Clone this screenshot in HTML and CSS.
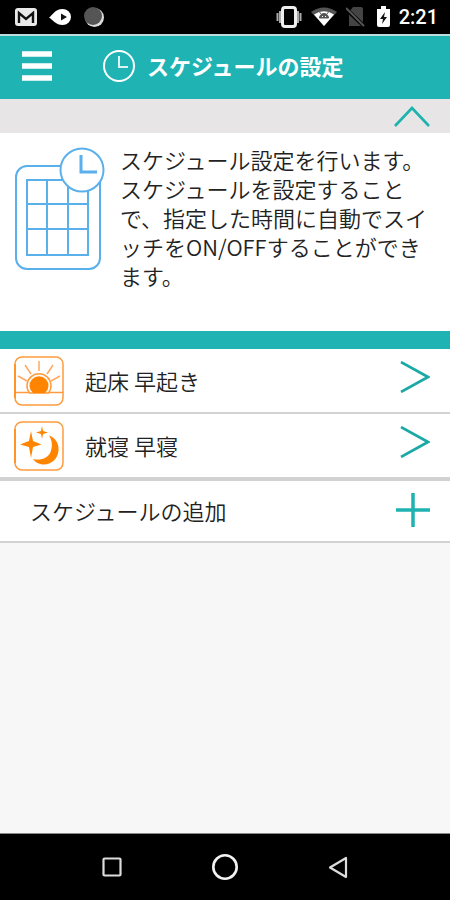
FILE: index.html
```html
<!DOCTYPE html>
<html lang="ja">
<head>
<meta charset="utf-8">
<meta name="viewport" content="width=device-width, initial-scale=1">
<title>スケジュールの設定</title>
<link rel="stylesheet" href="styles.css">
</head>
<body>
<div class="screen">
  <div class="status">
    <div class="status-group">
      <svg width="22" height="18" viewBox="0 0 22 18"><rect width="22" height="18" rx="3" fill="#e9e9e9"/><path d="M4 15V5l7 6 7-6v10" fill="none" stroke="#111" stroke-width="2.400"/></svg>
      <svg width="23" height="18" viewBox="0 0 23 18"><path d="M0 9.500C4 7 6 1 13.500 1a8.500 8 0 0 1 0 16C7 17 4 12 0 9.500z" fill="#fff"/><path d="M12 5.500l6 3.500-6 3.500z" fill="#111"/></svg>
      <svg width="20" height="20" viewBox="0 0 20 20"><circle cx="10.500" cy="10.500" r="9.500" fill="#ddd"/><circle cx="9" cy="9" r="9" fill="#555"/></svg>
    </div>
    <div class="status-group status-right">
      <svg width="26" height="22" viewBox="0 0 26 22"><path d="M1.500 7v8M4 5v12M22 5v12M24.500 7v8" stroke="#aaa" stroke-width="2"/><rect x="6.500" y="1.500" width="13" height="19" rx="2.500" fill="#000" stroke="#eee" stroke-width="3"/></svg>
      <svg width="26" height="20" viewBox="0 0 26 20"><path d="M0 5Q13-4 26 5L13 19z" fill="#555"/><path d="M3 7.500Q13 1 23 7.500L13 19z" fill="#fff"/><path d="M8.500 11a4.500 4.500 0 0 1 9 0zM10 7l-1.500-2M16 7l1.500-2" fill="#555" stroke="#555"/><path d="M11 9.500h1M14 9.500h1" stroke="#fff"/></svg>
      <svg width="19" height="20" viewBox="0 0 19 20"><path d="M7 0h8q2 0 2 2v17H3V5z" fill="#444"/><path d="M0 2l18 17" stroke="#000" stroke-width="4"/><path d="M0 1l18 18" stroke="#555" stroke-width="2"/></svg>
      <svg class="battery" width="13" height="22" viewBox="0 0 13 22"><path d="M4 0h5v3h4v16q0 2-2 2H2q-2 0-2-2V3h4z" fill="#fff"/><path d="M8 6l-5 7h3l-1 5 5-7H7z" fill="#111"/></svg>
      <span class="time">2:21</span>
    </div>
  </div>
  <header class="header">
    <button class="icon-button menu" aria-label="メニュー"><svg width="30" height="30" viewBox="0 0 30 30"><path d="M0 3h30M0 15h30M0 27h30" stroke="#fff" stroke-width="5.600"/></svg></button>
    <svg width="32" height="32" viewBox="0 0 32 32" fill="none" stroke="#fff"><circle cx="16" cy="16" r="15" stroke-width="2"/><path d="M16 6v11h9" stroke-width="2" opacity=".85"/></svg>
    <h1 class="title">スケジュールの設定</h1>
  </header>
  <main class="main">
    <div class="collapse">
      <button class="icon-button" aria-label="閉じる"><svg width="36" height="21" viewBox="0 0 36 21"><path d="M1 20L18 2l17 18" fill="none" stroke="#1db3af" stroke-width="2.600"/></svg></button>
    </div>
    <section class="intro">
      <svg class="intro-icon" width="91" height="124" viewBox="0 0 91 124" fill="none" stroke="#5ab0ea" stroke-width="2">
        <rect x="2" y="19" width="84" height="103" rx="11"/>
        <path d="M13 33h61v75H13zM33 33v75M54 33v75M13 57h61M13 82h61"/>
        <circle cx="68" cy="23" r="21.500" fill="#fff"/>
        <path d="M67 8v17h16" stroke-width="3"/>
      </svg>
      <p class="intro-text">スケジュール設定を行います。スケジュールを設定することで、指定した時間に自動でスイッチをON/OFFすることができます。</p>
    </section>
    <nav class="list">
      <a class="row" href="#wake">
        <svg width="50" height="50" viewBox="0 0 50 50" fill="none" stroke="#ff9b3d" stroke-width="1.500">
          <rect x="1" y="1" width="48" height="48" rx="7"/>
          <path d="M1 36.500h48"/><path d="M1 8v34" stroke="#ff8a10"/>
          <path d="M25 5v10M11 9l6 9M39 9l-6 9M4 20l9 5M46 20l-9 5" stroke="#ffa860"/>
          <path d="M15.500 37a12 12 0 1 1 19 0z" fill="#fff"/>
          <path d="M19 37a9.500 9.500 0 1 1 12 0z" fill="#ff8500" stroke="none"/>
        </svg>
        <span class="label">起床 早起き</span>
        <svg class="chevron" width="30" height="32" viewBox="0 0 30 32"><path d="M1 1l27 15L1 31" fill="none" stroke="#1ba9a6" stroke-width="2.600"/></svg>
      </a>
      <a class="row" href="#sleep">
        <svg width="50" height="50" viewBox="0 0 50 50">
          <rect x="1" y="1" width="48" height="48" rx="7" fill="none" stroke="#ff9b3d" stroke-width="1.500"/>
          <path d="M1 8v34" stroke="#ff8a10" stroke-width="1.500"/>
          <g fill="#ff8500"><path d="M35 14.500C42 17 45 23 44.500 29.500 44 38 37 43.500 30 43.500 25 43.500 21 41 19 38 27 40 34 37 36.500 31 39 25 38 19 35 14.500z"/><path d="M17 10l2 10 8.500 3.500L19 26l-2 11-2-11-9-2.500 9-3.500zM28 5l1 5 5 1.500-5 1.500-1 5-1-5-5-1.500 5-1.500z"/></g>
        </svg>
        <span class="label">就寝 早寝</span>
        <svg class="chevron" width="30" height="32" viewBox="0 0 30 32"><path d="M1 1l27 15L1 31" fill="none" stroke="#1ba9a6" stroke-width="2.600"/></svg>
      </a>
    </nav>
    <button class="add">
      <span>スケジュールの追加</span>
      <svg width="34" height="34" viewBox="0 0 34 34"><path d="M0 17h34M17 0v34" stroke="#20b2b0" stroke-width="3.500"/></svg>
    </button>
  </main>
  <div class="navbar">
    <button class="icon-button" aria-label="履歴"><svg width="26" height="26" viewBox="0 0 26 26"><rect x="4.500" y="4.500" width="17" height="17" rx="1" fill="none" stroke="#ddd" stroke-width="2.200"/></svg></button>
    <button class="icon-button" aria-label="ホーム"><svg width="26" height="26" viewBox="0 0 26 26"><circle cx="13" cy="13" r="11.700" fill="none" stroke="#f2f2f2" stroke-width="2.600"/></svg></button>
    <button class="icon-button" aria-label="戻る"><svg width="26" height="26" viewBox="0 0 26 26"><path d="M21 4v19L5 13.500z" fill="none" stroke="#ddd" stroke-width="2.200" stroke-linejoin="round"/></svg></button>
  </div>
</div>
</body>
</html>
```

FILE: styles.css
```css
* { box-sizing: border-box; }
body {
  margin: 0;
  background: #f7f7f7;
  color: #222;
  font-family: "Noto Sans CJK JP", sans-serif;
  font-size: 22px;
  font-weight: 350;
  line-height: 29px;
}
svg { display: block; flex: none; }
button { border: 0; background: none; font: inherit; color: inherit; cursor: pointer; }
.icon-button { padding: 0; }
.screen { min-height: 100vh; display: flex; flex-direction: column; }

.status {
  display: flex;
  align-items: center;
  justify-content: space-between;
  height: 36px;
  padding: 0 12px 0 15px;
  background: #000;
  border-bottom: 2px solid #b9dedd;
}
.status-group { display: flex; align-items: center; gap: 12px; }
.status-right { gap: 9px; }
.battery { margin-left: 3px; }
.time {
  color: #fff;
  font-family: Roboto, sans-serif;
  font-size: 20px;
  font-weight: 500;
}

.header {
  display: flex;
  align-items: center;
  height: 63px;
  padding: 0 22px 4px;
  background: #1fb4b3;
  color: #fff;
}
.menu { margin-right: 51px; }
.title { margin: 0 0 0 12px; font-size: 22px; font-weight: 700; }

.main { flex: 1; }
.collapse {
  display: flex;
  align-items: center;
  justify-content: flex-end;
  height: 34px;
  padding: 0 20px;
  background: #e7e5e6;
}
.intro {
  display: flex;
  gap: 15px;
  min-height: 198px;
  padding: 12px 16px 0 14px;
  background: #fff;
}
.intro-icon { margin-top: 2px; }
.intro-text { margin: 0; line-break: normal; }

.list { border-top: 18px solid #1fb4b3; border-bottom: 2px solid #d2d2d2; }
.row {
  display: flex;
  align-items: center;
  height: 65px;
  padding: 0 20px 0 14px;
  background: #fff;
  border-bottom: 2px solid #d2d2d2;
  color: inherit;
  text-decoration: none;
}
.label { flex: 1; margin-left: 21px; }
.chevron { margin-bottom: 8px; }
.add {
  display: flex;
  align-items: center;
  justify-content: space-between;
  width: 100%;
  height: 62px;
  padding: 0 20px 2px 30px;
  background: #fff;
  border-bottom: 2px solid #d2d2d2;
}

.navbar {
  display: flex;
  align-items: center;
  justify-content: center;
  gap: 87px;
  height: 67px;
  background: #000;
  border-top: 1px solid #888;
}
```
